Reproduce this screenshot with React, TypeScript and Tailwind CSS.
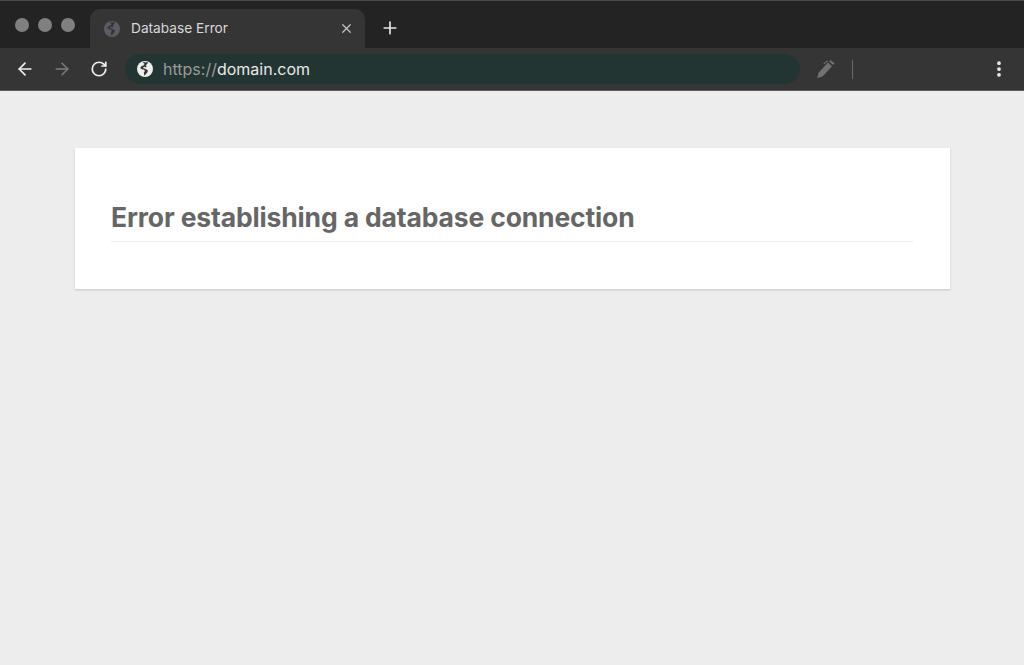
import React from 'react';
import { ArrowLeft, ArrowRight, RotateCw, X, Plus, EllipsisVertical } from 'lucide-react';

const Globe = ({ className }: { className: string }) => (
  <svg viewBox="0 0 16 16" className={className}>
    <circle cx="8" cy="8" r="8" fill="currentColor" />
    <path
      d="M5.5 1.2 7.6 3 6.4 4.6 4.4 5.2 3.2 7l2.2 1.4 1.8.2.6 1.6-1 1.6.6 3L9 13l1.6-2 .2-1.8-2.6-1.4-1.6-.6-.6-1 1.4-.4 1.2.6 1-.8-.8-1.4 1.6-1.4.6-1.6z"
      fill="#353535"
    />
  </svg>
);

const Pen = () => (
  <svg viewBox="0 0 20 20" className="w-5 h-5 text-[#727272]" fill="currentColor">
    <path d="M1.2 19 2.6 13.8 12 3.6l4 3.6-9.4 10.2z" />
    <path d="M13.2 2.4l1.4-1.4 4 3.6-1.4 1.4z" />
    <path d="M7.4 4.4l4-3 .6.8-4 3z" />
  </svg>
);

export default function App() {
  return (
    <div className="w-[1024px] h-[665px] flex flex-col overflow-hidden bg-[#ededed] font-['Inter',sans-serif]">
      {/* tab strip */}
      <div className="h-12 flex items-end bg-[#232323] border-t border-[#4a4a4a] pl-[15px] shrink-0">
        <div className="flex gap-[9px] self-start mt-[17px]">
          <span className="w-3.5 h-3.5 rounded-full bg-[#808080]" />
          <span className="w-3.5 h-3.5 rounded-full bg-[#808080]" />
          <span className="w-3.5 h-3.5 rounded-full bg-[#808080]" />
        </div>
        <div className="ml-[15px] w-[275px] h-[39px] flex items-center rounded-t-[10px] bg-[#353535] pl-[14px] pr-[11px]">
          <Globe className="w-4 h-4 text-[#5c5c66]" />
          <span className="ml-[11px] text-[13.7px] text-[#d8d8d8]">Database Error</span>
          <X className="ml-auto w-[15px] h-[15px] text-[#c4c4c4]" strokeWidth={2} />
        </div>
        <Plus className="ml-[15px] mb-[10px] w-[20px] h-[20px] text-[#e6e6e6]" strokeWidth={2} />
      </div>

      {/* toolbar */}
      <div className="h-[43px] flex items-center bg-[#353535] border-b border-[#5a5a5a] pl-[15px] pr-[15px] shrink-0">
        <ArrowLeft className="w-5 h-5 text-[#f0f0f0]" strokeWidth={2} />
        <ArrowRight className="ml-[17px] w-5 h-5 text-[#7d7d7d]" strokeWidth={1.75} />
        <RotateCw className="ml-[18px] w-[18px] h-[18px] text-[#f0f0f0]" strokeWidth={2.25} />
        <div className="ml-[17px] w-[675px] h-[30px] flex items-center rounded-full bg-[#233532] pl-[12px]">
          <Globe className="w-4 h-4 text-[#eeeeee]" />
          <span className="ml-[10px] text-[16px] text-[#9a9a9a]">
            https://<span className="text-[#e8e8e8]">domain.com</span>
          </span>
        </div>
        <div className="ml-[16px]">
          <Pen />
        </div>
        <div className="ml-[16px] w-px h-[19px] bg-[#6a6a6a]" />
        <EllipsisVertical className="ml-auto w-5 h-5 text-[#eeeeee]" strokeWidth={2.5} />
      </div>

      {/* page */}
      <div className="flex-1 pl-[75px] pt-[57px] pr-[74px]">
        <div className="h-[141px] bg-white shadow-[0_1px_2px_rgba(0,0,0,0.18)] pl-[36px] pr-[37px] pt-[52px]">
          <h1 className="h-[42px] border-b border-[#ececec] text-[26.5px] leading-[34px] font-bold tracking-[-0.15px] text-[#666666]">
            Error establishing a database connection
          </h1>
        </div>
      </div>
    </div>
  );
}
